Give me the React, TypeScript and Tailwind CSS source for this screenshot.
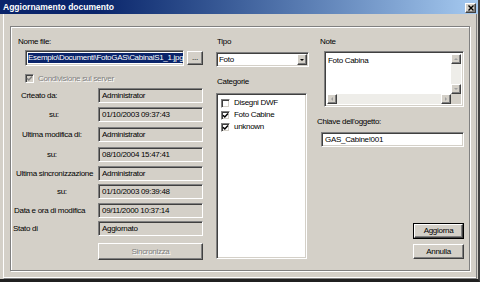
import React from 'react';

const raised =
    'bg-[#d4d0c8] border border-t-white border-l-white border-r-[#404040] border-b-[#404040] shadow-[inset_-1px_-1px_0_#808080]';
const sunken =
    'border border-t-[#808080] border-l-[#808080] border-r-white border-b-white shadow-[inset_1px_1px_0_#404040,inset_-1px_-1px_0_#d4d0c8]';

const Check = ({ color = '#000' }: { color?: string }) => (
    <svg width="7" height="7" viewBox="0 0 7 7">
        <path d="M1 3.2l1.8 1.8L6 1.6" stroke={color} strokeWidth="1.5" fill="none" />
    </svg>
);

const Arrow = ({ dir, color = '#a0a0a0' }: { dir: 'up' | 'down' | 'left' | 'right'; color?: string }) => {
    const pts = {
        up: '1,4 5,4 3,2',
        down: '1,2 5,2 3,4',
        left: '4,1 4,5 2,3',
        right: '2,1 2,5 4,3',
    }[dir];
    return (
        <svg width="6" height="6" viewBox="0 0 6 6">
            <polygon points={pts} fill={color} />
        </svg>
    );
};

const InfoRow = ({ label, value, pad, top }: { label: string; value: string; pad: string; top: string }) => (
    <div className={`flex items-center h-[15px] ${top}`}>
        <span className={`w-[87px] whitespace-nowrap ${pad}`}>{label}</span>
        <div className={`w-[105px] h-[15px] bg-[#d4d0c8] pl-[3px] flex items-center ${sunken}`}>{value}</div>
    </div>
);

const CategoryItem = ({ label, checked }: { label: string; checked: boolean }) => (
    <div className="flex items-center h-[12px] gap-[4px]">
        <div className={`w-[9px] h-[9px] bg-white flex items-center justify-center ${sunken}`}>
            {checked && <Check />}
        </div>
        <span>{label}</span>
    </div>
);

export default function App() {
    return (
        <div className="w-[480px] h-[282px] bg-[#d4d0c8] flex flex-col overflow-hidden font-['Liberation_Sans',Arial,sans-serif] text-[8px] leading-[10px] tracking-[-0.3px] text-black border-r-[2px] border-r-[#404040] border-b-[3px] border-b-[#202020]">
            {/* Title bar */}
            <div className="h-[14px] shrink-0 flex items-center pl-[3px] pr-[2px] bg-gradient-to-r from-[#0a246a] from-20% to-[#a6caf0]">
                <span className="text-white font-bold text-[8.5px] tracking-normal">Aggiornamento documento</span>
                <div className={`ml-auto w-[11px] h-[10px] mt-[2px] flex items-center justify-center ${raised}`}>
                    <svg width="6" height="6" viewBox="0 0 6 6">
                        <path d="M0.5 0.5l5 5M5.5 0.5l-5 5" stroke="#000" strokeWidth="1.4" />
                    </svg>
                </div>
            </div>

            {/* Body */}
            <div className="flex-1 ml-[3px] mr-[1px] border-l border-l-white border-r border-r-[#808080] border-b border-b-[#808080] shadow-[inset_0_-1px_0_#fff]">
                <div className="ml-[6px] mt-[12px] w-[460px] h-[245px] border border-[#808080] shadow-[1px_1px_0_#fff,inset_1px_1px_0_#fff] flex items-start">
                    {/* Left column */}
                    <div className="w-[194px] flex flex-col">
                        <span className="mt-[10px] pl-[7px] h-[10px]">Nome file:</span>
                        <div className="mt-[3px] pl-[14px] flex items-start">
                            <div className={`w-[159px] h-[16px] bg-white flex items-center pl-[2px] overflow-hidden ${sunken}`}>
                                <span className="bg-[#0a246a] text-white whitespace-nowrap">Esempio\Documenti\FotoGAS\CabinalS1_1.jpg</span>
                            </div>
                            <div className={`ml-[3px] mt-[1px] w-[16px] h-[14px] flex items-center justify-center ${raised}`}>...</div>
                        </div>
                        <div className="mt-[8px] pl-[14px] flex items-center h-[9px] gap-[4px]">
                            <div className={`w-[9px] h-[9px] bg-[#d4d0c8] flex items-center justify-center ${sunken}`}>
                                <Check color="#808080" />
                            </div>
                            <span className="text-[#808080] [text-shadow:1px_1px_0_#fff]">Condivisione sul server</span>
                        </div>

                        <InfoRow top="mt-[5px]" pad="pl-[10px]" label="Crteato da:" value="Administrator" />
                        <InfoRow top="mt-[4px]" pad="pl-[38px]" label="su:" value="01/10/2003 09:37:43" />
                        <InfoRow top="mt-[5px]" pad="pl-[11px]" label="Ultima modifica di:" value="Administrator" />
                        <InfoRow top="mt-[5px]" pad="pl-[36px]" label="su:" value="08/10/2004 15:47:41" />
                        <InfoRow top="mt-[4px]" pad="pl-[5px]" label="Ultima sincronizzazione" value="Administrator" />
                        <InfoRow top="mt-[3px]" pad="pl-[46px]" label="su:" value="01/10/2003 09:39:48" />
                        <InfoRow top="mt-[4px]" pad="pl-[3px]" label="Data e ora di modifica" value="09/11/2000 10:37:14" />
                        <InfoRow top="mt-[3px]" pad="pl-[2px]" label="Stato di" value="Aggiornato" />

                        <div className={`mt-[7px] ml-[87px] w-[105px] h-[17px] flex items-center justify-center text-[#808080] [text-shadow:1px_1px_0_#fff] ${raised}`}>
                            Sincronizza
                        </div>
                    </div>

                    {/* Middle column */}
                    <div className="ml-[11px] w-[93px] flex flex-col">
                        <span className="mt-[10px] pl-[1px] h-[10px]">Tipo</span>
                        <div className={`mt-[5px] w-[93px] h-[15px] bg-white flex items-center pl-[2px] pr-[1px] ${sunken}`}>
                            <span className="flex-1">Foto</span>
                            <div className={`w-[10px] h-[11px] flex items-center justify-center ${raised}`}>
                                <Arrow dir="down" color="#000" />
                            </div>
                        </div>
                        <span className="mt-[10px] pl-[1px] h-[10px]">Categorie</span>
                        <div className={`mt-[6px] w-[91px] h-[166px] bg-white pl-[4px] pt-[3px] flex flex-col ${sunken}`}>
                            <CategoryItem label="Disegni DWF" checked={false} />
                            <CategoryItem label="Foto Cabine" checked />
                            <CategoryItem label="unknown" checked />
                        </div>
                    </div>

                    {/* Right column */}
                    <div className="ml-[8px] w-[147px] flex flex-col">
                        <span className="mt-[10px] pl-[3px] h-[10px]">Note</span>
                        <div className={`mt-[4px] ml-[7px] w-[140px] h-[56px] bg-white p-[2px] grid grid-cols-[1fr_10px] grid-rows-[1fr_10px] ${sunken}`}>
                            <div className="pl-[1px] pt-[2px]">Foto Cabina</div>
                            <div className="bg-[#eeede9] flex flex-col justify-between">
                                <div className={`h-[10px] flex items-center justify-center ${raised}`}>
                                    <Arrow dir="up" />
                                </div>
                                <div className={`h-[10px] flex items-center justify-center ${raised}`}>
                                    <Arrow dir="down" />
                                </div>
                            </div>
                            <div className="bg-[#eeede9] flex justify-between">
                                <div className={`w-[10px] flex items-center justify-center ${raised}`}>
                                    <Arrow dir="left" />
                                </div>
                                <div className={`w-[10px] flex items-center justify-center ${raised}`}>
                                    <Arrow dir="right" />
                                </div>
                            </div>
                            <div className="bg-[#d4d0c8]" />
                        </div>
                        <span className="mt-[10px] h-[10px]">Chiave dell'oggetto:</span>
                        <div className={`mt-[5px] ml-[4px] w-[143px] h-[15px] bg-white flex items-center pl-[3px] ${sunken}`}>
                            GAS_Cabine!001
                        </div>

                        <div className="mt-[76px] self-end w-[51px] h-[16px] border border-black">
                            <div className={`w-full h-full flex items-center justify-center ${raised}`}>Aggiorna</div>
                        </div>
                        <div className={`mt-[5px] self-end w-[51px] h-[15px] flex items-center justify-center ${raised}`}>
                            Annulla
                        </div>
                    </div>
                </div>
            </div>
        </div>
    );
}
